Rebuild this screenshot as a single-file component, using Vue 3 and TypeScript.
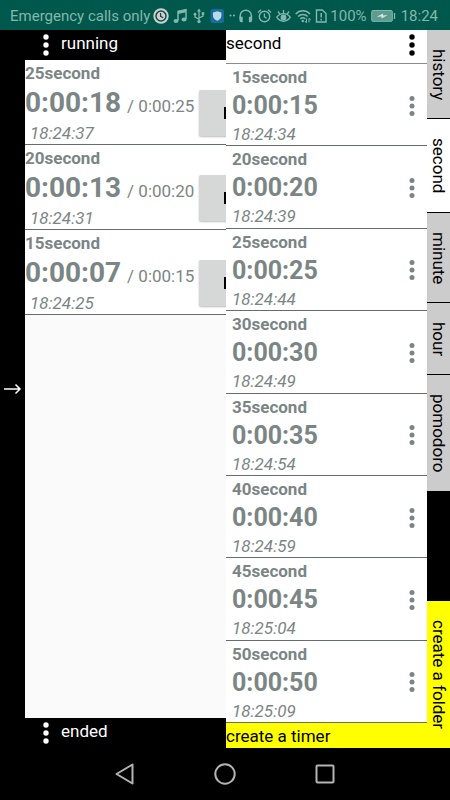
<script setup lang="ts">
interface RunningTimer {
  name: string
  left: string
  total: string
  endsAt: string
}

interface PresetTimer {
  name: string
  duration: string
  endsAt: string
}

const running: RunningTimer[] = [
  { name: '25second', left: '0:00:18', total: '0:00:25', endsAt: '18:24:37' },
  { name: '20second', left: '0:00:13', total: '0:00:20', endsAt: '18:24:31' },
  { name: '15second', left: '0:00:07', total: '0:00:15', endsAt: '18:24:25' },
]

const presets: PresetTimer[] = [
  { name: '15second', duration: '0:00:15', endsAt: '18:24:34' },
  { name: '20second', duration: '0:00:20', endsAt: '18:24:39' },
  { name: '25second', duration: '0:00:25', endsAt: '18:24:44' },
  { name: '30second', duration: '0:00:30', endsAt: '18:24:49' },
  { name: '35second', duration: '0:00:35', endsAt: '18:24:54' },
  { name: '40second', duration: '0:00:40', endsAt: '18:24:59' },
  { name: '45second', duration: '0:00:45', endsAt: '18:25:04' },
  { name: '50second', duration: '0:00:50', endsAt: '18:25:09' },
]

const folders: string[] = ['history', 'second', 'minute', 'hour', 'pomodoro']
const current = 'second'
</script>

<template>
  <div class="screen">
    <header class="status">
      <span>Emergency calls only</span>
      <svg class="icon" viewBox="0 0 16 16">
        <circle cx="8" cy="8" r="7.7" fill="#c3d8d4" />
        <circle cx="8" cy="8" r="5" fill="#c3d8d4" stroke="#2c3f40" stroke-width="1.5" />
        <path d="M7.6 5v3.3l2.6 1.5" fill="none" stroke="#2c3f40" stroke-width="1.3" />
      </svg>
      <svg class="icon" viewBox="0 0 16 16">
        <path d="M6 12.6V3.4L14 1.7v9.2" fill="none" stroke="currentColor" stroke-width="1.5" />
        <path d="M6 3l8-1.7v3L6 6z" fill="currentColor" />
        <ellipse cx="4" cy="12.9" rx="2.5" ry="2" fill="currentColor" />
        <ellipse cx="12" cy="11.4" rx="2.5" ry="2" fill="currentColor" />
      </svg>
      <svg class="icon" viewBox="0 0 16 16">
        <path d="M8 2v11M8 11.2L4 9V6.5M8 10l4-2V5.5" fill="none" stroke="currentColor" stroke-width="1.3" />
        <path d="M8 .6l2 3H6z" fill="currentColor" />
        <circle cx="8" cy="13.6" r="1.7" fill="currentColor" />
        <circle cx="4" cy="6.2" r="1.4" fill="currentColor" />
        <path d="M10.7 4.2h2.6v2.6h-2.6z" fill="currentColor" />
      </svg>
      <svg class="icon" viewBox="0 0 16 16">
        <rect x=".5" y="1" width="13.5" height="14" rx="2.5" fill="#1b6c9c" />
        <path d="M7.2 3.2l4.2 1.4v3.2c0 2.4-1.8 4-4.2 5-2.4-1-4.2-2.6-4.2-5V4.600z" fill="#b9dbe8" />
      </svg>
      <svg class="dots" viewBox="0 0 6 16">
        <circle cx="1.500" cy="7.500" r="1" fill="currentColor" />
        <circle cx="5" cy="7.500" r="1" fill="currentColor" />
      </svg>
      <svg class="icon" viewBox="0 0 16 16">
        <path d="M2.200 11V7.800a5.600 5.600 0 0 1 11.200 0V11" fill="none" stroke="currentColor" stroke-width="1.500" />
        <path d="M1.500 8.800h3.200v5.400H3.200a1.700 1.700 0 0 1-1.700-1.700zM14.100 8.800h-3.200v5.400h1.500a1.700 1.700 0 0 0 1.700-1.700z" fill="currentColor" />
      </svg>
      <svg class="icon" viewBox="0 0 16 16">
        <circle cx="7.500" cy="8.500" r="5.200" fill="none" stroke="currentColor" stroke-width="1.400" />
        <path d="M7.400 5.500v3.300l2.200 1.400M1 4.400l3-2.600M14 4.400l-3-2.600" fill="none" stroke="currentColor" stroke-width="1.300" />
      </svg>
      <svg class="icon" viewBox="0 0 16 16">
        <path d="M.8 9.200C4.200 4.400 10.800 4.400 14.200 9.200 10.800 14.600 4.200 14.600.8 9.200z" fill="none" stroke="currentColor" stroke-width="1.400" />
        <circle cx="7.500" cy="9.400" r="2.900" fill="currentColor" />
        <path d="M7.500 5.200V2M3.800 6L2 3.500M11.200 6L13 3.500" stroke="currentColor" stroke-width="1.300" />
      </svg>
      <svg class="icon" viewBox="0 0 16 16">
        <path d="M.7 6c4-4.200 10.300-4.200 14.300 0M3 8.500c2.800-2.800 7-2.800 9.700 0M5.300 10.900c1.500-1.400 3.500-1.400 5 0" fill="none" stroke="currentColor" stroke-width="1.500" />
        <circle cx="7.800" cy="13" r="1.200" fill="currentColor" />
        <path d="M11.500 10.500v4M11.500 15l-1.500-2M14 14.500v-4M14 10l1.500 2" fill="none" stroke="currentColor" />
      </svg>
      <svg class="sim" viewBox="0 0 13 16">
        <path d="M2.500 2h5.800L12 5.500V14H2.500z" fill="none" stroke="currentColor" stroke-width="1.400" />
        <path d="M7.200 5v4.600M7.200 10.800v1.600" stroke="currentColor" stroke-width="1.500" />
      </svg>
      <span>100%</span>
      <svg class="battery" viewBox="0 0 26 16">
        <rect x="1.700" y="2.500" width="20.600" height="10.800" rx="1" fill="#5d9b8f" stroke="currentColor" />
        <path d="M24.500 5v6" stroke="currentColor" stroke-width="1.300" />
        <path d="M6.500 8.800l6.500-3.300v2l4.800-.5-6.300 3.600V8.500z" fill="#d3e8e4" />
      </svg>
      <span class="clock">18:24</span>
    </header>

    <main class="board">
      <button class="rail" aria-label="expand">
        <svg viewBox="0 0 18 12"><path d="M0 6h16M11.500 1.500L16 6l-4.500 4.500" fill="none" stroke="#fff" stroke-width="1.500" /></svg>
      </button>

      <section class="pane left">
        <div class="bar">
          <button class="menu" aria-label="running menu">
            <svg viewBox="0 0 6 22"><circle cx="3" cy="3" r="2.700" /><circle cx="3" cy="11" r="2.700" /><circle cx="3" cy="19" r="2.700" /></svg>
          </button>
          <h2>running</h2>
        </div>
        <ul class="running">
          <li v-for="t in running" :key="t.name">
            <div class="info">
              <h3>{{ t.name }}</h3>
              <p class="time"><strong>{{ t.left }}</strong><span>/ {{ t.total }}</span></p>
              <p class="ends">{{ t.endsAt }}</p>
            </div>
            <button class="pause" aria-label="pause">
              <svg viewBox="0 0 12 12"><path d="M0 0h4v12H0zM8 0h4v12H8z" /></svg>
            </button>
          </li>
        </ul>
        <div class="bar">
          <button class="menu" aria-label="ended menu">
            <svg viewBox="0 0 6 22"><circle cx="3" cy="3" r="2.700" /><circle cx="3" cy="11" r="2.700" /><circle cx="3" cy="19" r="2.700" /></svg>
          </button>
          <h2>ended</h2>
        </div>
      </section>

      <section class="pane right">
        <div class="title">
          <h2>second</h2>
          <button class="menu" aria-label="second menu">
            <svg viewBox="0 0 6 22"><circle cx="3" cy="3" r="2.700" /><circle cx="3" cy="11" r="2.700" /><circle cx="3" cy="19" r="2.700" /></svg>
          </button>
        </div>
        <ul class="presets">
          <li v-for="t in presets" :key="t.name">
            <div>
              <h3>{{ t.name }}</h3>
              <p class="duration">{{ t.duration }}</p>
              <p class="ends">{{ t.endsAt }}</p>
            </div>
            <button class="menu" :aria-label="t.name + ' menu'">
              <svg viewBox="0 0 6 22"><circle cx="3" cy="3.500" r="2.500" /><circle cx="3" cy="11" r="2.500" /><circle cx="3" cy="18.500" r="2.500" /></svg>
            </button>
          </li>
        </ul>
        <button class="create">create a timer</button>
      </section>

      <nav class="tabs">
        <button v-for="f in folders" :key="f" class="tab" :class="{ active: f === current }">{{ f }}</button>
        <button class="tab folder">create a folder</button>
      </nav>
    </main>

    <footer class="nav">
      <button aria-label="back">
        <svg viewBox="0 0 24 24"><path d="M19.500 2.500v19L3.500 12z" stroke-linejoin="round" /></svg>
      </button>
      <button aria-label="home">
        <svg viewBox="0 0 24 24"><circle cx="12" cy="12" r="9.700" /></svg>
      </button>
      <button aria-label="recent apps">
        <svg viewBox="0 0 24 24"><rect x="3.500" y="3.500" width="17" height="17" rx="1" /></svg>
      </button>
    </footer>
  </div>
</template>

<style>
body {
  margin: 0;
  background: #000;
}
</style>

<style scoped>
.screen {
  display: flex;
  flex-direction: column;
  min-height: 100vh;
  background: #000;
  font-family: Roboto, "Liberation Sans", sans-serif;
  font-size: 17px;
}

h2,
h3,
p,
ul {
  margin: 0;
  padding: 0;
  list-style: none;
}

button {
  margin: 0;
  padding: 0;
  border: 0;
  background: none;
  color: inherit;
  font: inherit;
}

svg {
  display: block;
}

.status {
  display: flex;
  align-items: center;
  gap: 3px;
  box-sizing: border-box;
  height: 30px;
  padding: 1px 12px 0 10px;
  background: #00574b;
  color: #83b8ad;
  font-size: 15px;
  white-space: nowrap;
}

.icon {
  flex: none;
  width: 16px;
  height: 16px;
}

.dots {
  flex: none;
  width: 6px;
  height: 16px;
}

.sim {
  flex: none;
  width: 13px;
  height: 16px;
}

.battery {
  flex: none;
  width: 26px;
  height: 16px;
}

.clock {
  margin-left: auto;
}

.board {
  flex: 1;
  display: grid;
  grid-template-columns: 25px minmax(0, 1fr) minmax(0, 1fr) 23px;
}

.rail {
  display: flex;
  align-items: center;
  justify-content: center;
}

.rail svg {
  width: 18px;
  height: 12px;
}

.pane {
  display: flex;
  flex-direction: column;
  overflow: hidden;
}

h2 {
  font-size: 17px;
  font-weight: 400;
  line-height: 26px;
}

h3 {
  font-size: 17px;
  font-weight: 700;
  line-height: 22px;
}

.menu {
  display: flex;
  align-items: center;
  justify-content: center;
  width: 30px;
}

.menu svg {
  width: 6px;
  height: 22px;
  fill: currentColor;
}

.bar {
  display: flex;
  height: 30px;
  padding-left: 6px;
  background: #000;
  color: #fff;
}

.running {
  flex: 1;
  background: #fafafa;
  color: #7b8585;
}

.running li {
  display: flex;
  justify-content: space-between;
  padding-top: 2px;
  border-bottom: 1px solid #686c6c;
  background: #fff;
}

.info {
  flex: none;
  width: 174px;
}

.time {
  display: flex;
  align-items: baseline;
  gap: 6px;
  line-height: 20px;
  white-space: nowrap;
}

.time strong {
  font-size: 28px;
  line-height: 38px;
}

.ends {
  font-style: italic;
  line-height: 20px;
}

.running .ends {
  padding-left: 5px;
  line-height: 22px;
}

.pause {
  flex: none;
  align-self: flex-end;
  width: 60px;
  height: 46px;
  margin-bottom: 8px;
  padding-left: 25px;
  border-radius: 2px;
  background: #d6d7d7;
  box-shadow: 0 1px 2px #bbb;
  color: #000;
}

.pause svg {
  width: 12px;
  height: 12px;
}

.right {
  background: #fff;
}

.title {
  display: flex;
  justify-content: space-between;
  padding-bottom: 3px;
  border-bottom: 1px solid #8a8c8c;
}

.title .menu {
  height: 30px;
}

.presets {
  flex: 1;
  display: grid;
  grid-auto-rows: 1fr;
  color: #7b8585;
}

.presets li {
  display: flex;
  justify-content: space-between;
  padding: 2px 0 0 6px;
  border-bottom: 1px solid #686c6c;
}

.duration {
  font-size: 25px;
  font-weight: 700;
  line-height: 36px;
}

.create {
  padding-top: 1px;
  background: #ff0;
  color: #000;
  line-height: 24px;
  text-align: left;
}

.tabs {
  display: flex;
  flex-direction: column;
}

.tab {
  padding: 19px 0 18px;
  border-bottom: 1px solid #000;
  background: #ccc;
  color: #000;
  line-height: 23px;
  writing-mode: vertical-rl;
}

.tab.active {
  background: #fff;
}

.tab.folder {
  margin-top: auto;
  padding-bottom: 19px;
  border-bottom: 0;
  background: #ff0;
}

.nav {
  display: flex;
  justify-content: center;
  height: 52px;
}

.nav button {
  display: flex;
  align-items: center;
  justify-content: center;
  width: 100px;
}

.nav svg {
  width: 24px;
  height: 24px;
  fill: none;
  stroke: #b4b4b4;
  stroke-width: 2;
}
</style>
